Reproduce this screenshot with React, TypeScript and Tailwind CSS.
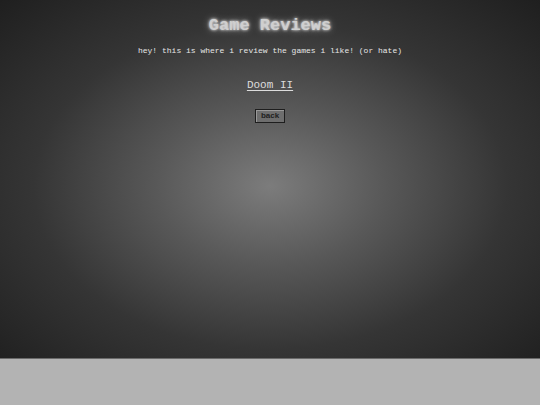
export default function App() {
  return (
    <div className="w-[540px] h-[405px] bg-[#b3b3b3]">
      <div
        className="h-[359px] border-b border-[#6a6a6a] flex flex-col items-center text-center bg-[radial-gradient(ellipse_at_50%_52%,#7c7c7c_0%,#585858_30%,#353535_62%,#1f1f1f_100%)]"
        style={{ fontFamily: '"Liberation Mono", "Courier New", monospace' }}
      >
        <h1 className="mt-[15px] text-[17px] leading-[22px] font-bold text-[#cfcfcf] [text-shadow:0_0_3px_#fff,0_0_7px_rgba(255,255,255,0.55)]">
          Game Reviews
        </h1>
        <p className="mt-[9px] text-[8px] leading-[10px] text-[#e6e6e6]">
          hey! this is where i review the games i like! (or hate)
        </p>
        <a href="#" className="mt-[22px] text-[11px] leading-[14px] text-[#dcdcdc] underline underline-offset-2">
          Doom II
        </a>
        <button
          className="mt-[17px] w-[30px] h-[14px] bg-[#6e6e6e] border border-[#1e1e1e] shadow-[inset_1px_1px_0_#999] text-[8px] font-bold text-[#1e1e1e] leading-none"
          style={{ fontFamily: '"Liberation Sans", Arial, sans-serif' }}
        >
          back
        </button>
      </div>
    </div>
  );
}
